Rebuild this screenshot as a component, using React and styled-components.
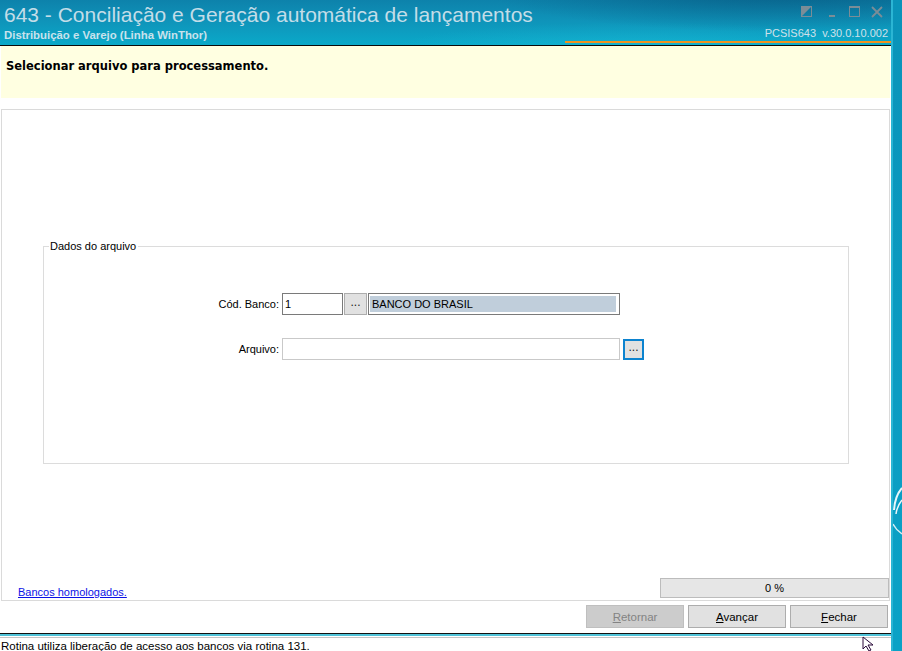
import styled, { createGlobalStyle } from "styled-components";

const Global = createGlobalStyle`
  html, body { margin: 0; padding: 0; background: #fff; }
  body { font-family: "Liberation Sans", Arial, sans-serif; font-size: 11px; color: #000; }
  * { box-sizing: border-box; }
`;

const Screen = styled.div`
  width: 902px;
  height: 651px;
  display: flex;
  overflow: hidden;
  position: relative;
`;

const Window = styled.div`
  width: 891px;
  height: 651px;
  display: flex;
  flex-direction: column;
  background: #fff;
  > * { flex-shrink: 0; }
`;

const Desktop = styled.div`
  flex: 1;
  border-left: 2px solid #2bb5d4;
  background: linear-gradient(180deg, #0a93b9 0%, #0b9cc2 60%, #0aa2c6 100%);
  position: relative;
  svg { position: absolute; left: 0; top: 480px; }
`;

/* ---------- title bar ---------- */
const TitleBar = styled.div`
  height: 46px;
  display: flex;
  border-bottom: 1px solid #0b0b0b;
  margin-right: -2px;
  background:
    radial-gradient(ellipse 420px 60px at 780px -10px, rgba(4, 70, 110, 0.55), rgba(4, 70, 110, 0) 70%),
    radial-gradient(ellipse 360px 40px at 640px 50px, rgba(40, 200, 225, 0.35), rgba(40, 200, 225, 0) 70%),
    linear-gradient(180deg, #0d82ab 0%, #0f93b9 45%, #0aa9c9 100%);
`;

const TitleText = styled.div`
  flex: 1;
  padding: 3px 0 0 4px;
  display: flex;
  flex-direction: column;
`;

const Title = styled.div`
  font-size: 21px;
  line-height: 24px;
  color: #c3dde8;
  white-space: nowrap;
`;

const Subtitle = styled.div`
  font-size: 11.4px;
  font-weight: bold;
  line-height: 13px;
  margin-top: 2px;
  color: #c9e2ec;
`;

const TitleRight = styled.div`
  width: 328px;
  display: flex;
  flex-direction: column;
  align-items: flex-end;
  margin-bottom: 2px;
  border-bottom: 2px solid #f0921f;
`;

const WinButtons = styled.div`
  display: flex;
  align-items: flex-start;
  gap: 11px;
  padding: 6px 10px 0 0;
  height: 27px;
  svg { display: block; }
`;

const Version = styled.div`
  font-size: 11px;
  line-height: 12px;
  color: #cfe1ea;
  padding-right: 5px;
  white-space: pre;
`;

/* ---------- yellow header ---------- */
const Header = styled.div`
  margin: 0 1px;
  height: 52px;
  padding: 13px 5px 0;
  background: #ffffe1;
  font-family: "DejaVu Sans", Verdana, sans-serif;
  font-weight: bold;
  font-size: 11.5px;
`;

/* ---------- main panel ---------- */
const Panel = styled.div`
  margin: 11px 1px 0 1px;
  height: 492px;
  border: 1px solid #dadada;
  display: flex;
  flex-direction: column;
  padding-top: 130px;
`;

const Group = styled.fieldset`
  margin: 0 40px 0 41px;
  height: 224px;
  border: 1px solid #dcdcdc;
  padding: 0;
  min-width: 0;
  legend {
    margin-left: 5px;
    padding: 0 2px 0 1px;
    font-size: 11px;
    line-height: 13px;
  }
`;

const Fields = styled.div`
  padding-top: 40px;
  display: flex;
  flex-direction: column;
  gap: 23px;
`;

const Row = styled.div`
  display: flex;
  align-items: center;
`;

const Label = styled.label`
  width: 238px;
  padding-right: 3px;
  text-align: right;
  font-size: 11px;
`;

const Input = styled.div`
  width: ${(p) => p.$w}px;
  height: 22px;
  border: 1px solid ${(p) => (p.$dark ? "#7a7a7a" : "#c9c9c9")};
  background: #fff;
  padding: 4px 2px;
  font-size: 11px;
  line-height: 12px;
`;

const NameBox = styled.div`
  width: 252px;
  height: 22px;
  margin-left: 1px;
  border: 1px solid #7a7a7a;
  padding: 2px 3px 2px 1px;
  background: #fff;
  div {
    height: 16px;
    background: #c0cedb;
    padding: 2px 2px 0;
    font-size: 11px;
    line-height: 12px;
  }
`;

const Dots = styled.button`
  width: ${(p) => (p.$focus ? 21 : 23)}px;
  height: ${(p) => (p.$focus ? 21 : 22)}px;
  margin-left: ${(p) => (p.$focus ? 3 : 1)}px;
  border: ${(p) => (p.$focus ? "2px solid #0c83cf" : "1px solid #adadad")};
  background: #e1e1e1;
  padding: 0 0 4px;
  font-family: "Liberation Sans", Arial, sans-serif;
  font-size: 12px;
  line-height: 11px;
  color: #1a1a1a;
`;

const Spacer = styled.div`
  flex: 1;
`;

const PanelFoot = styled.div`
  display: flex;
  align-items: flex-end;
  justify-content: space-between;
  padding: 0 0 2px 16px;
`;

const Link = styled.a`
  color: #0b12e6;
  text-decoration: underline;
  font-size: 11px;
`;

const Progress = styled.div`
  width: 229px;
  height: 20px;
  border: 1px solid #bcbcbc;
  background: #e6e6e6;
  text-align: center;
  font-size: 11px;
  line-height: 18px;
`;

/* ---------- wizard buttons ---------- */
const Buttons = styled.div`
  display: flex;
  justify-content: flex-end;
  gap: 4px;
  padding: 4px 3px 0 0;
  height: 31px;
`;

const Btn = styled.button`
  width: 98px;
  height: 23px;
  border: 1px solid ${(p) => (p.disabled ? "#bfbfbf" : "#adadad")};
  background: ${(p) => (p.disabled ? "#cccccc" : "#e1e1e1")};
  color: ${(p) => (p.disabled ? "#838383" : "#000")};
  font-family: "Liberation Sans", Arial, sans-serif;
  font-size: 11.5px;
  padding: 0;
`;

const Divider = styled.div`
  margin-top: 1px;
  height: 3px;
  border-top: 1px solid #111;
  background: #4fc3d8;
  margin-right: -1px;
`;

const StatusBar = styled.div`
  margin-top: 1px;
  flex: 1 1 auto;
  min-height: 0;
  overflow: hidden;
  border-top: 1px solid #c4c4c4;
  padding: 1px 0 0 1px;
  font-size: 11.5px;
  line-height: 14px;
  white-space: nowrap;
`;

const Cursor = styled.svg`
  position: absolute;
  left: 862px;
  top: 636px;
`;

const iconColor = "#7b8d97";

export default function App() {
  return (
    <>
      <Global />
      <Screen>
        <Window>
          <TitleBar>
            <TitleText>
              <Title>643 - Conciliação e Geração automática de lançamentos</Title>
              <Subtitle>Distribuição e Varejo (Linha WinThor)</Subtitle>
            </TitleText>
            <TitleRight>
              <WinButtons>
                <svg width="11" height="11" viewBox="0 0 11 11">
                  <rect x="0.5" y="0.5" width="10" height="10" fill="none" stroke={iconColor} />
                  <polygon points="0,0 11,0 0,11" fill={iconColor} />
                </svg>
                <svg width="11" height="11" viewBox="0 0 11 11" style={{ marginLeft: 4 }}>
                  <rect x="2" y="9" width="6" height="2" fill={iconColor} />
                </svg>
                <svg width="11" height="11" viewBox="0 0 11 11">
                  <rect x="0.5" y="0.5" width="10" height="10" fill="none" stroke={iconColor} />
                  <rect x="0" y="0" width="11" height="2" fill={iconColor} />
                </svg>
                <svg width="12" height="12" viewBox="0 0 12 12">
                  <path d="M1 1 L11 11 M11 1 L1 11" stroke={iconColor} strokeWidth="1.8" />
                </svg>
              </WinButtons>
              <Version>{"PCSIS643  v.30.0.10.002"}</Version>
            </TitleRight>
          </TitleBar>

          <Header>Selecionar arquivo para processamento.</Header>

          <Panel>
            <Group>
              <legend>Dados do arquivo</legend>
              <Fields>
                <Row>
                  <Label>Cód. Banco:</Label>
                  <Input $w={61} $dark>1</Input>
                  <Dots>...</Dots>
                  <NameBox>
                    <div>BANCO DO BRASIL</div>
                  </NameBox>
                </Row>
                <Row>
                  <Label>Arquivo:</Label>
                  <Input $w={338} />
                  <Dots $focus>...</Dots>
                </Row>
              </Fields>
            </Group>
            <Spacer />
            <PanelFoot>
              <Link href="#">Bancos homologados.</Link>
              <Progress>0 %</Progress>
            </PanelFoot>
          </Panel>

          <Buttons>
            <Btn disabled>
              <u>R</u>etornar
            </Btn>
            <Btn>
              <u>A</u>vançar
            </Btn>
            <Btn>
              <u>F</u>echar
            </Btn>
          </Buttons>

          <Divider />
          <StatusBar>Rotina utiliza liberação de acesso aos bancos via rotina 131.</StatusBar>
        </Window>

        <Desktop>
          <svg width="9" height="80" viewBox="0 0 9 80">
            <path d="M9 8 Q2 16 1 30" stroke="#e8f7fb" strokeWidth="2" fill="none" />
            <path d="M9 20 Q4 26 3 34" stroke="#e8f7fb" strokeWidth="1.5" fill="none" />
            <path d="M9 54 Q3 50 0 44" stroke="#d4eef5" strokeWidth="1.5" fill="none" />
          </svg>
        </Desktop>

        <Cursor width="14" height="16" viewBox="0 0 14 16">
          <path d="M1 1 L1 13 L4 10 L7 15 L9 14 L6 9 L11 9 Z" fill="#fff" stroke="#2a0a3a" strokeWidth="1" />
        </Cursor>
      </Screen>
    </>
  );
}
